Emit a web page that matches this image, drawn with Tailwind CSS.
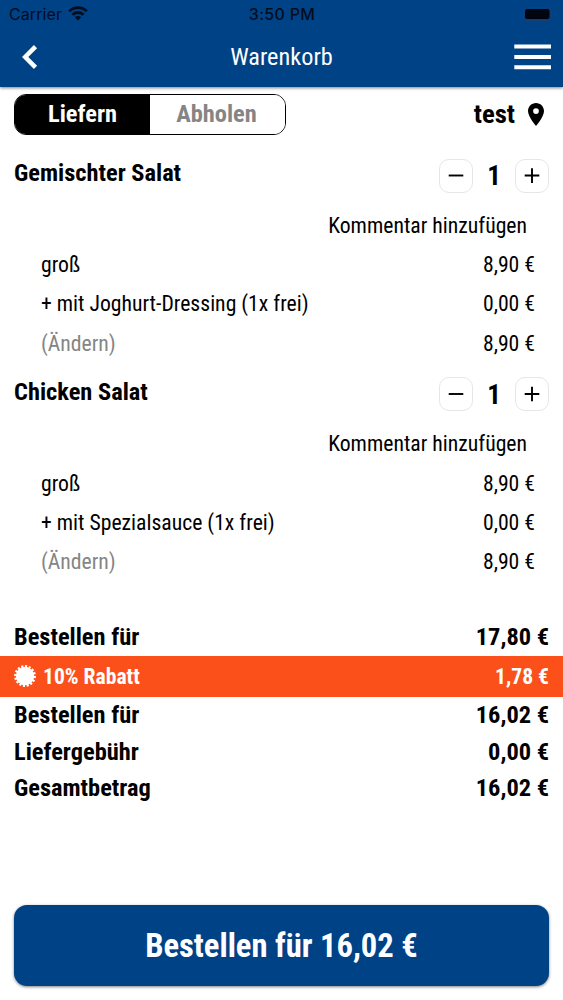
<!DOCTYPE html>
<html lang="de">
<head>
<meta charset="utf-8">
<title>Warenkorb</title>
<script src="https://cdn.jsdelivr.net/npm/@tailwindcss/browser@4"></script>
</head>
<body class="w-[563px] h-[1000px] overflow-hidden bg-white text-black font-['Roboto_Condensed','Roboto',sans-serif] [font-stretch:75%] whitespace-nowrap">
<div class="flex flex-col h-[1000px]">
  <header class="h-[87px] shrink-0 bg-[#004286] shadow-[0_1px_3px_rgba(0,0,0,0.5)]">
    <div class="h-7 grid grid-cols-3 items-center pl-[9px] pr-[8px] font-['Inter',sans-serif] [font-stretch:100%] text-[#020d1f]">
      <div class="flex items-center gap-[6px]">
        <span class="text-[16px] tracking-[0.1px]">Carrier</span>
        <svg class="w-5 h-[15px] -translate-y-px" viewBox="0 0 20 15" fill="none" stroke="#020d1f" stroke-width="2.8"><path d="M1.2 5.3a12.6 12.6 0 0 1 17.6 0M4.4 8.8a8 8 0 0 1 11.2 0"/><path d="M10 14.500l-3.200-3.200a4.600 4.600 0 0 1 6.400 0z" fill="#020d1f" stroke="none"/></svg>
      </div>
      <span class="text-center text-[16px] font-medium tracking-[0.3px]">3:50 PM</span>
      <svg class="justify-self-end w-[32px] h-[14px]" viewBox="0 0 32 14"><rect x=".5" y=".5" width="27.500" height="13" rx="3.500" fill="none" stroke="#173f72"/><rect x="2" y="2" width="24.500" height="10" rx="2" fill="#000510"/><path d="M30 5q1.500 2 0 4z" fill="#173f72"/></svg>
    </div>
    <div class="h-[58px] grid grid-cols-3 items-center pl-[22px] pr-3 text-white">
      <svg class="w-4 h-6" viewBox="0 0 16 24" fill="none" stroke="white" stroke-width="4.500"><path d="M13.500 1.700L3.200 12l10.300 10.300"/></svg>
      <h1 class="justify-self-center text-[24.300px] leading-7 -translate-x-[5px]">Warenkorb</h1>
      <svg class="justify-self-end w-[37px] h-[26px]" viewBox="0 0 37 26" fill="white"><path d="M.3 .5h37v4h-37zM.3 11h37v4h-37zM.3 21.200h37v4h-37z"/></svg>
    </div>
  </header>

  <div class="h-[68px] shrink-0 flex items-start justify-between pt-[7px] px-[14px]">
    <div class="w-[272px] h-[41px] flex rounded-[12px] border border-black overflow-hidden text-[24.400px] font-bold leading-[38px] text-center">
      <div class="w-[135px] bg-black text-white">Liefern</div>
      <div class="flex-1 bg-white text-[#858585] pr-0.5">Abholen</div>
    </div>
    <div class="flex items-center h-[41px] gap-[13px] pr-[5px]">
      <span class="text-[26.700px] font-bold">test</span>
      <svg class="w-4 h-[23px]" viewBox="5 2 14 20"><path d="M12 2C8.130 2 5 5.130 5 9c0 5.250 7 13 7 13s7-7.750 7-13c0-3.870-3.130-7-7-7zm0 9.500a2.500 2.500 0 1 1 0-5 2.500 2.500 0 0 1 0 5z"/></svg>
    </div>
  </div>

  <section class="h-[218.500px] shrink-0 text-[21.700px]">
    <div class="h-[50px] flex justify-between px-[14px]">
      <h2 class="text-[24.400px] font-bold leading-[36px]">Gemischter Salat</h2>
      <div class="flex items-center h-[34px] mt-[3.500px]">
        <div class="size-[34px] rounded-[10px] border border-[#e6e6e6] grid place-items-center"><svg class="size-4" viewBox="0 0 16 16"><path d="M.7 7.500h14.600" stroke="black" stroke-width="1.900"/></svg></div>
        <span class="w-[42px] text-center text-[27px] leading-[34px] font-bold pt-px">1</span>
        <div class="size-[34px] rounded-[10px] border border-[#e6e6e6] grid place-items-center"><svg class="size-4" viewBox="0 0 16 16"><path d="M.7 7.500h14.600M8 .3v14.600" stroke="black" stroke-width="1.900"/></svg></div>
      </div>
    </div>
    <div class="h-10 leading-[41px] text-right pr-[36px]">Kommentar hinzufügen</div>
    <div class="h-[39.300px] leading-[39.300px] flex justify-between pl-[41px] pr-[28px]"><span>groß</span><span>8,90 €</span></div>
    <div class="h-[39.300px] leading-[39.300px] flex justify-between pl-[41px] pr-[28px]"><span>+ mit Joghurt-Dressing (1x frei)</span><span>0,00 €</span></div>
    <div class="h-[39.300px] leading-[39.300px] flex justify-between pl-[41px] pr-[28px]"><span class="text-[#858585]">(Ändern)</span><span>8,90 €</span></div>
  </section>

  <section class="h-[218.500px] shrink-0 text-[21.700px]">
    <div class="h-[50px] flex justify-between px-[14px]">
      <h2 class="text-[24.400px] font-bold leading-[35px]">Chicken Salat</h2>
      <div class="flex items-center h-[34px] mt-[3.500px]">
        <div class="size-[34px] rounded-[10px] border border-[#e6e6e6] grid place-items-center"><svg class="size-4" viewBox="0 0 16 16"><path d="M.7 8h14.600" stroke="black" stroke-width="1.900"/></svg></div>
        <span class="w-[42px] text-center text-[27px] leading-[34px] font-bold pt-px">1</span>
        <div class="size-[34px] rounded-[10px] border border-[#e6e6e6] grid place-items-center"><svg class="size-4" viewBox="0 0 16 16"><path d="M.7 8h14.600M8 .7v14.600" stroke="black" stroke-width="1.900"/></svg></div>
      </div>
    </div>
    <div class="h-10 leading-10 text-right pr-[36px]">Kommentar hinzufügen</div>
    <div class="h-[39.300px] leading-[39.300px] flex justify-between pl-[41px] pr-[28px]"><span>groß</span><span>8,90 €</span></div>
    <div class="h-[39.300px] leading-[39.300px] flex justify-between pl-[41px] pr-[28px]"><span>+ mit Spezialsauce (1x frei)</span><span>0,00 €</span></div>
    <div class="h-[39.300px] leading-[39.300px] flex justify-between pl-[41px] pr-[28px]"><span class="text-[#858585]">(Ändern)</span><span>8,90 €</span></div>
  </section>

  <section class="mt-[26px] shrink-0 text-[24.400px] font-bold">
    <div class="h-[38px] leading-[38px] flex justify-between px-[14px]"><span>Bestellen für</span><span>17,80 €</span></div>
    <div class="h-[41px] bg-[#fc501b] text-white text-[21.600px] leading-[40px] flex items-center justify-between px-[14px]">
      <div class="flex items-center gap-[7px]">
        <svg class="size-[22px] -translate-y-px" viewBox="-11 -11 22 22"><circle r="9.200" fill="white"/><circle r="9.500" fill="none" stroke="white" stroke-width="2.800" pathLength="32" stroke-dasharray="1.100 .9"/></svg>
        <span>10% Rabatt</span>
      </div>
      <span>1,78 €</span>
    </div>
    <div class="h-[36.500px] leading-[35px] flex justify-between px-[14px]"><span>Bestellen für</span><span>16,02 €</span></div>
    <div class="h-[36.500px] leading-[35px] flex justify-between px-[14px]"><span>Liefergebühr</span><span>0,00 €</span></div>
    <div class="h-[36.500px] leading-[36.500px] flex justify-between px-[14px]"><span>Gesamtbetrag</span><span>16,02 €</span></div>
  </section>

  <button class="mt-auto mb-[14px] mx-[14px] h-[81.500px] shrink-0 rounded-[13px] bg-[#004286] text-white text-[32.600px] leading-[81px] pt-px font-bold shadow-[0_1px_3px_rgba(0,0,0,0.5)]">Bestellen für 16,02 €</button>
</div>
</body>
</html>
